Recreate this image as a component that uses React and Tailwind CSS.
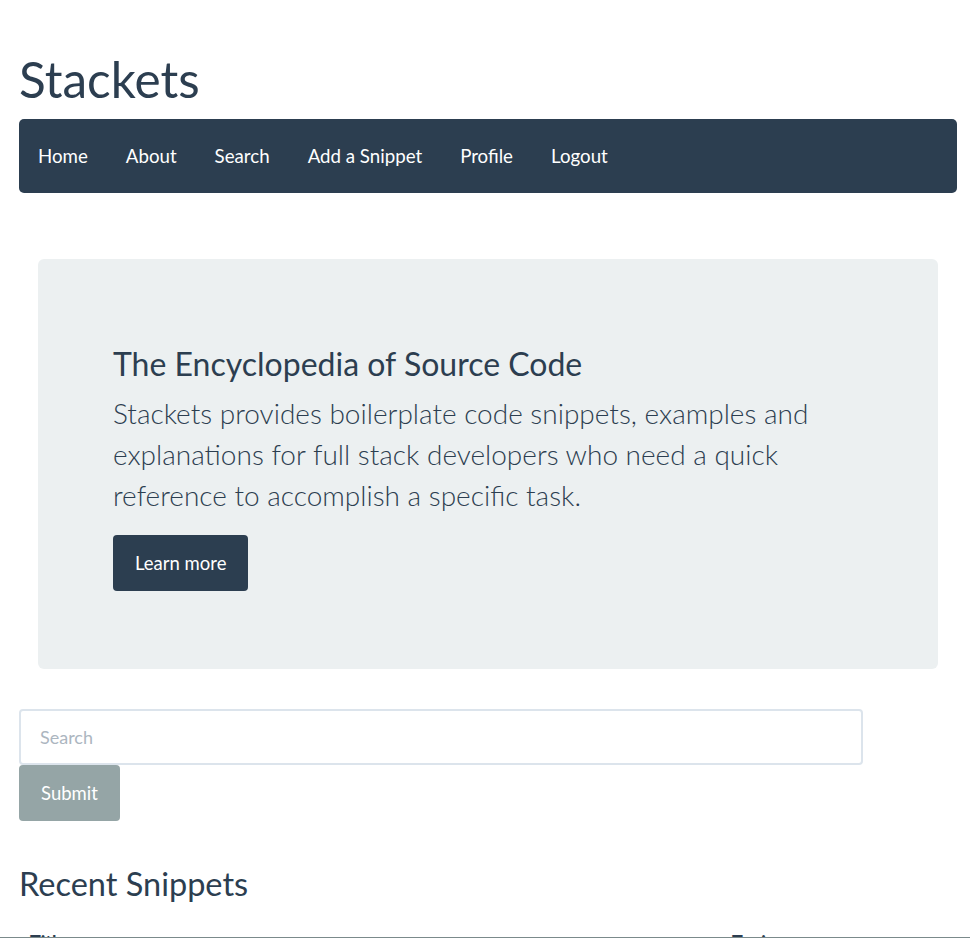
export default function App() {
  const links = ["Home", "About", "Search", "Add a Snippet", "Profile", "Logout"];
  return (
    <div className="min-h-screen bg-white font-['Lato','Liberation_Sans',sans-serif] text-[#2c3e50]">
      <div className="ml-[19px] w-[938px]">
        {/* Brand */}
        <h1 className="pt-[50px] mb-[11px] text-[49.5px] leading-[58px] font-normal">Stackets</h1>

        {/* Navbar */}
        <nav className="h-[74px] bg-[#2c3e50] rounded-[5px] flex items-center">
          <ul className="flex items-center">
            {links.map((l) => (
              <li key={l}>
                <a href="#" className="block px-[19px] text-[18.7px] leading-[27px] text-white">
                  {l}
                </a>
              </li>
            ))}
          </ul>
        </nav>

        {/* Jumbotron */}
        <div className="mt-[66px] mx-[19px] bg-[#ecf0f1] rounded-[6px] pt-[86px] pb-[78px] px-[75px]">
          <h1 className="text-[32px] leading-[38.4px] font-normal">The Encyclopedia of Source Code</h1>
          <p className="mt-[10px] text-[28px] leading-[41px] font-light">
            Stackets provides boilerplate code snippets, examples and explanations for full stack developers who need a quick reference to accomplish a specific task.
          </p>
          <button className="mt-[19px] h-[56px] px-[22px] bg-[#2c3e50] text-white text-[18.5px] rounded-[4px]">
            Learn more
          </button>
        </div>

        {/* Search form */}
        <form className="mt-[40px]">
          <input
            type="text"
            placeholder="Search"
            className="block w-[844px] h-[56px] border-2 border-[#dce4ec] rounded-[4px] px-[19px] text-[18px] text-[#2c3e50] placeholder:text-[#acb6c0] outline-none"
          />
          <button type="button" className="block h-[56px] w-[101px] bg-[#95a5a6] text-white text-[18.5px] rounded-[4px]">
            Submit
          </button>
        </form>

        {/* Recent snippets */}
        <h2 className="mt-[44px] text-[32.5px] leading-[38.4px] font-normal">Recent Snippets</h2>
        <table className="mt-[13px] w-full text-[18px] leading-[27px]">
          <thead>
            <tr>
              <th className="text-left font-bold px-[11px] py-[12px] w-[702px]">Title</th>
              <th className="text-left font-bold px-[11px] py-[12px]">Topic</th>
            </tr>
          </thead>
        </table>
      </div>
      <div className="fixed bottom-0 left-0 w-full h-px bg-[#7b8a8b]"></div>
    </div>
  );
}
